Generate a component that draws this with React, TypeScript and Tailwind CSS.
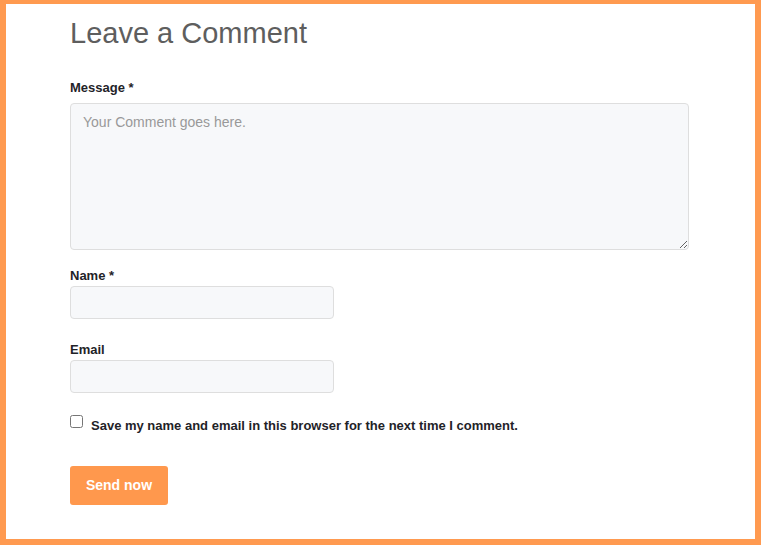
export default function App() {
  return (
    <div className="w-[761px] h-[545px] bg-[#ff9a50] pt-[4px] pl-[6px] pr-[6px] pb-[6px] font-['Liberation_Sans',Arial,sans-serif]">
      <div className="h-full bg-white pl-[64px] pt-[12px]">
        <h2 className="text-[29px] leading-[34px] text-[#5e5e5e] font-normal">Leave a Comment</h2>

        <form className="flex flex-col mt-[30px]" onSubmit={(e) => e.preventDefault()}>
          <label className="text-[13px] leading-[16px] font-bold text-[#1f2328]">Message *</label>
          <textarea
            placeholder="Your Comment goes here."
            className="mt-[7px] w-[619px] h-[147px] bg-[#f7f8fa] border border-[#dedede] rounded-[4px] px-[12px] py-[8px] text-[14px] leading-[20px] text-[#333] placeholder:text-[#999] outline-none"
          />

          <label className="mt-[18px] text-[13px] leading-[16px] font-bold text-[#1f2328]">Name *</label>
          <input
            type="text"
            className="mt-[2px] w-[264px] h-[33px] bg-[#f7f8fa] border border-[#dedede] rounded-[4px] px-[12px] text-[14px] outline-none"
          />

          <label className="mt-[23px] text-[13px] leading-[16px] font-bold text-[#1f2328]">Email</label>
          <input
            type="email"
            className="mt-[2px] w-[264px] h-[33px] bg-[#f7f8fa] border border-[#dedede] rounded-[4px] px-[12px] text-[14px] outline-none"
          />

          <div className="mt-[22px] flex items-start">
            <input type="checkbox" className="w-[13px] h-[13px] m-0 mt-[0px]" />
            <span className="ml-[8px] mt-[3px] text-[13px] leading-[16px] font-bold text-[#1f2328]">
              Save my name and email in this browser for the next time I comment.
            </span>
          </div>

          <div className="mt-[32px]">
            <button
              type="submit"
              className="w-[98px] h-[39px] flex items-center justify-center bg-[#ff984d] text-white text-[14px] font-bold rounded-[3px]"
            >
              Send now
            </button>
          </div>
        </form>
      </div>
    </div>
  );
}
